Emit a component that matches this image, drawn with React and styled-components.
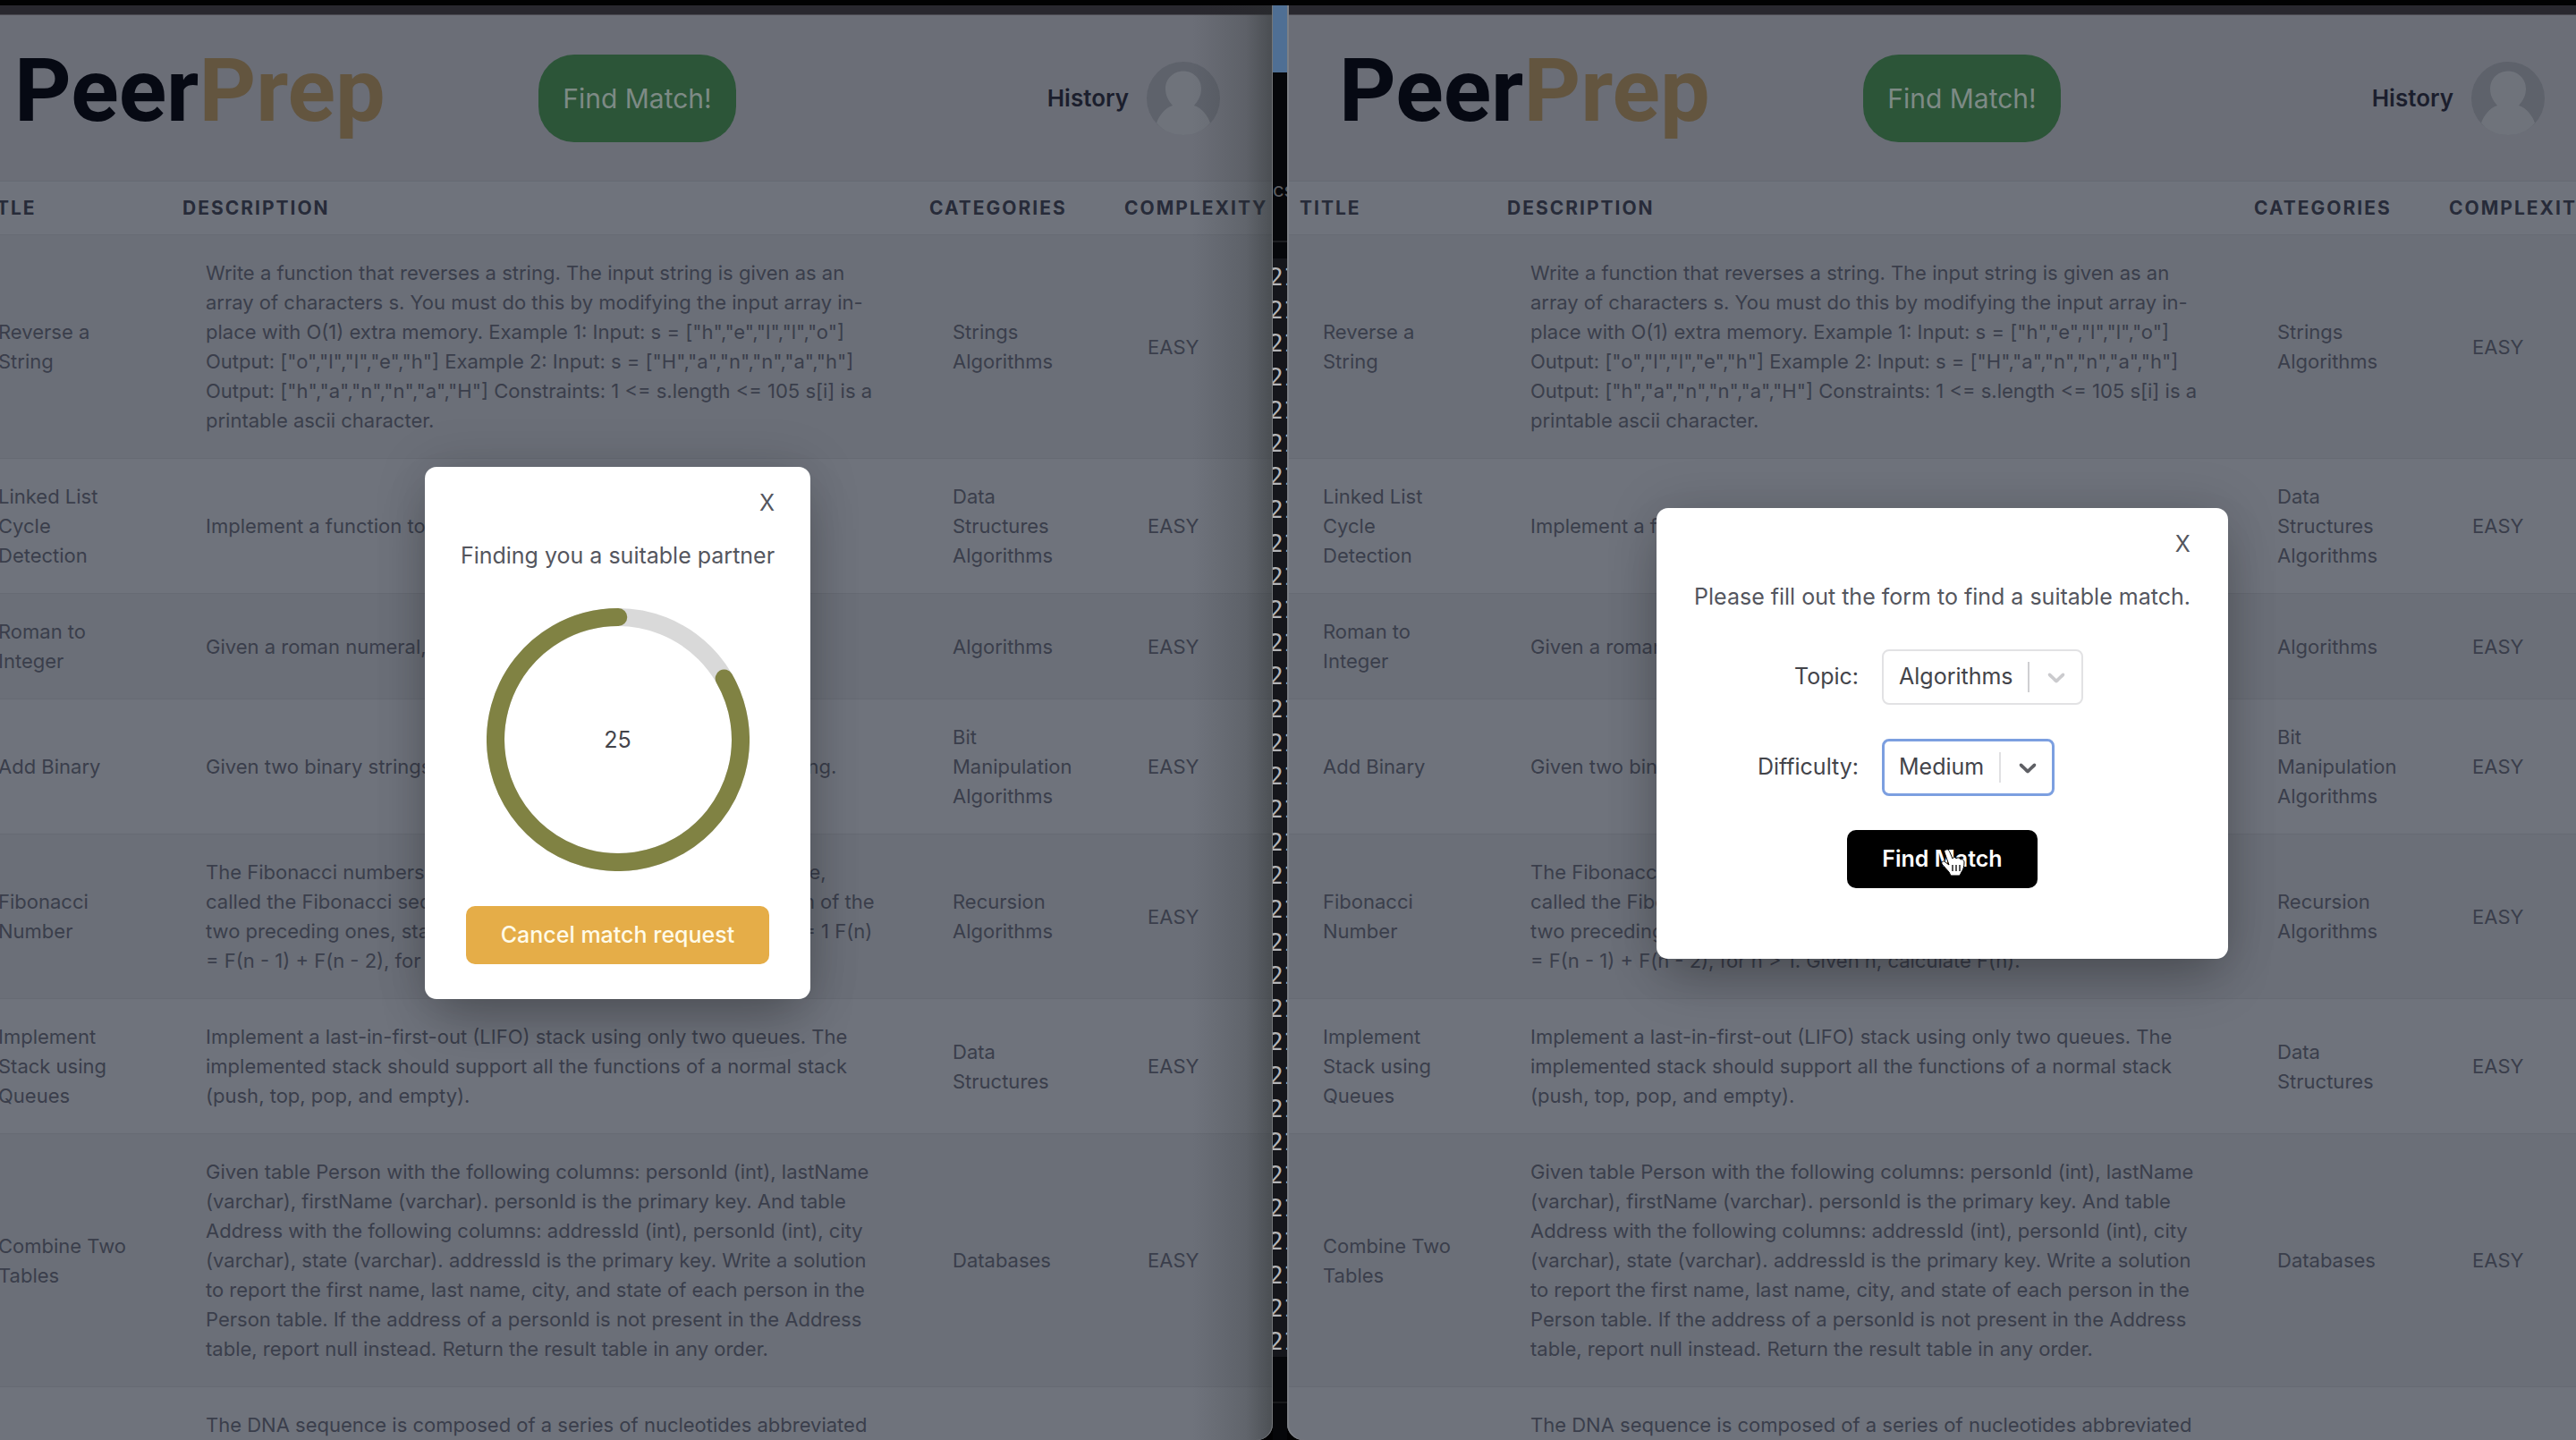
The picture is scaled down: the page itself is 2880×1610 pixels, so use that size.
import React from "react";
import styled, { createGlobalStyle } from "styled-components";

const c = {
  page: "#6b6e77",
  rowOdd: "#6b6f78",
  rowEven: "#6f737c",
  line: "#666a73",
  ink: "#3a3e4b",
  heading: "#272b39",
};

const GlobalStyle = createGlobalStyle`
  * { box-sizing: border-box; }
  body {
    margin: 0;
    background: #000;
    font-family: Inter, "Liberation Sans", sans-serif;
    -webkit-font-smoothing: antialiased;
  }
  button, select { font: inherit; }
  p { margin: 0; }
`;

const Desktop = styled.main`
  display: grid;
  grid-template-columns: 1423fr 16px 1441fr;
  height: 100vh;
  padding-top: 6px;
  overflow: hidden;
  background: #020203;
`;

const BrowserWindow = styled.section`
  position: relative;
  display: flex;
  flex-direction: column;
  align-items: ${(p) => (p.$side === "left" ? "flex-end" : "flex-start")};
  min-width: 0;
  overflow: hidden;
  background: ${c.page};
  border-radius: ${(p) => (p.$side === "left" ? "0 0 18px 0" : "0 0 0 18px")};

  &::after {
    content: "";
    position: absolute;
    inset: 0;
    pointer-events: none;
    border-radius: inherit;
    background: ${(p) =>
      p.$side === "left"
        ? "linear-gradient(to left, rgba(40, 44, 44, 0.5), rgba(40, 44, 44, 0.2) 30px, rgba(40, 44, 44, 0) 90px)"
        : "none"};
    box-shadow: ${(p) =>
      p.$side === "left" ? "inset -1px 0 0 #74777a" : "inset 2px 0 0 #7c7f85"};
  }
`;

const Chrome = styled.div`
  flex: none;
  width: 100%;
  height: 11px;
  background: #29282f;
  border-bottom: 1px solid #4b4b51;
`;

const Page = styled.div`
  flex: 1 0 0;
  width: 100%;
  min-width: 1465px;
  min-height: 0;
`;

const Header = styled.header`
  display: grid;
  grid-template-columns: 586px 221px 1fr;
  align-items: center;
  height: 185px;
  padding: 0 59px 0 58px;
`;

const Logo = styled.a`
  padding-bottom: 18px;
  color: #060913;
  font-family: Roboto, "Liberation Sans", sans-serif;
  font-size: 99px;
  font-weight: 700;
  line-height: 120px;
  text-decoration: none;
  span { color: #63553f; }
`;

const MatchButton = styled.button`
  height: 98px;
  border: 0;
  border-radius: 40px;
  background: #2c5538;
  color: #7d8a85;
  font-size: 30px;
  white-space: nowrap;
`;

const Nav = styled.nav`
  display: flex;
  align-items: center;
  justify-content: flex-end;
  gap: 20px;
`;

const NavLink = styled.a`
  color: #1b1e2d;
  font-size: 26px;
  font-weight: 600;
  text-decoration: none;
`;

const AvatarIcon = styled.svg`
  display: block;
  width: 82px;
  height: 82px;
`;

const Table = styled.table`
  width: 100%;
  table-layout: fixed;
  border-collapse: collapse;
  color: ${c.ink};
  font-size: 22px;
  line-height: 33px;
`;

const HeadCell = styled.th`
  height: 60px;
  padding: 1px 0 0 14px;
  background: ${c.rowEven};
  border-top: 1px solid ${c.line};
  border-bottom: 1px solid ${c.line};
  color: ${c.heading};
  font-size: 21px;
  font-weight: 700;
  letter-spacing: 2px;
  line-height: 32px;
  text-align: left;
  text-transform: uppercase;
`;

const Row = styled.tr`
  background: ${c.rowOdd};
  border-bottom: 1px solid ${c.line};
  &:nth-child(even) { background: ${c.rowEven}; }
`;

const Cell = styled.td`
  padding: 26px 38px 25px 40px;
  vertical-align: middle;
`;

const Terminal = styled.aside`
  display: flex;
  flex-direction: column;
  min-height: 0;
  overflow: hidden;
  background: #06070a;
  color: #b4b5b8;
  font-family: "DejaVu Sans Mono", monospace;
  font-size: 26px;
`;

const TerminalTab = styled.div`
  flex: none;
  height: 75px;
  background: #4f6f94;
`;

const TerminalTitle = styled.div`
  flex: none;
  height: 190px;
  padding-top: 118px;
  border-bottom: 2px solid #1c1d20;
  color: #5c5d61;
  font-family: Inter, sans-serif;
  font-size: 22px;
`;

const TerminalLog = styled.div`
  flex: 1 1 0;
  display: flex;
  flex-direction: column;
  justify-content: space-between;
  min-height: 0;
  margin: 18px 0 50px;
  padding-top: 4px;
  background: #15161b;
  text-indent: -4px;
  line-height: 34px;
`;

const TerminalFoot = styled.div`
  flex: none;
  height: 43px;
  border-top: 2px solid #17181a;
`;

const Overlay = styled.div`
  position: absolute;
  top: 23px;
  bottom: 0;
  width: 100%;
  min-width: 1465px;
  display: flex;
  align-items: center;
  justify-content: center;
`;

const Modal = styled.div`
  display: flex;
  flex-direction: column;
  align-items: center;
  padding: ${(p) => (p.$roomy ? "21px 42px 79px" : "21px 40px 39px")};
  border-radius: 13px;
  background: #fff;
  box-shadow: 0 30px 60px -12px rgba(0, 0, 0, 0.26), 0 0 60px rgba(0, 0, 0, 0.14);
  color: #54565e;
  font-size: 25px;
  line-height: 39px;
`;

const CloseButton = styled.button`
  align-self: flex-end;
  padding: 0;
  border: 0;
  background: none;
  color: inherit;
  line-height: 39px;
`;

const Message = styled.p`
  margin: 20px 0 39px;
  white-space: nowrap;
`;

const Timer = styled.div`
  display: grid;
  place-items: center;
  margin-bottom: 39px;
  color: #43444a;
  > * { grid-area: 1 / 1; }
`;

const Ring = styled.svg`
  width: 294px;
  height: 294px;
`;

const ActionButton = styled.button`
  height: 65px;
  padding: 0 39px;
  border: 0;
  border-radius: 10px;
  background: ${(p) => (p.$dark ? "#000" : "#e5ad48")};
  color: ${(p) => (p.$dark ? "#fff" : "#fffbe8")};
  font-weight: ${(p) => (p.$dark ? 600 : 500)};
  white-space: nowrap;
`;

const Form = styled.form`
  display: flex;
  flex-direction: column;
  align-items: center;
  width: 100%;
  gap: 38px;
`;

const Field = styled.div`
  display: grid;
  grid-template-columns: 8fr 15fr;
  column-gap: 26px;
  align-items: center;
  width: 100%;
  color: #43444a;
`;

const FieldLabel = styled.label`
  text-align: right;
`;

const SelectBox = styled.div`
  display: grid;
  align-items: center;
  justify-self: start;
  > * { grid-area: 1 / 1; }
`;

const Select = styled.select`
  appearance: none;
  height: ${(p) => (p.$active ? "64px" : "62px")};
  padding: 0 76px 0 ${(p) => (p.$active ? "16px" : "17px")};
  border: ${(p) => (p.$active ? "3px solid #7c9fe0" : "2px solid #e2e2e4")};
  border-radius: 8px;
  background: #fff;
  color: #43444a;
  outline: none;
  field-sizing: content;
`;

const SelectArrow = styled.div`
  justify-self: end;
  display: flex;
  align-items: center;
  height: 34px;
  padding: 0 14px;
  border-left: 2px solid ${(p) => (p.$active ? "#e0e0e2" : "#cfcfd2")};
  color: ${(p) => (p.$active ? "#5f6065" : "#cbcbce")};
  pointer-events: none;
  svg { display: block; width: 32px; height: 32px; }
`;

const SubmitArea = styled.div`
  position: relative;
`;

const Pointer = styled.svg`
  position: absolute;
  left: 104px;
  top: 20px;
  width: 28px;
  height: 33px;
`;

const questions = [
  ["Reverse a String", 'Write a function that reverses a string. The input string is given as an array of characters s. You must do this by modifying the input array in-place with O(1) extra memory. Example 1: Input: s = ["h","e","l","l","o"] Output: ["o","l","l","e","h"] Example 2: Input: s = ["H","a","n","n","a","h"] Output: ["h","a","n","n","a","H"] Constraints: 1 <= s.length <= 105 s[i] is a printable ascii character.', ["Strings", "Algorithms"]],
  ["Linked List Cycle Detection", "Implement a function to detect if a linked list contains a cycle.", ["Data Structures", "Algorithms"]],
  ["Roman to Integer", "Given a roman numeral, convert it to an integer.", ["Algorithms"]],
  ["Add Binary", "Given two binary strings a and b, return their sum as a binary string.", ["Bit Manipulation", "Algorithms"]],
  ["Fibonacci Number", "The Fibonacci numbers, commonly denoted F(n) form a sequence, called the Fibonacci sequence, such that each number is the sum of the two preceding ones, starting from 0 and 1. That is, F(0) = 0, F(1) = 1 F(n) = F(n - 1) + F(n - 2), for n > 1. Given n, calculate F(n).", ["Recursion", "Algorithms"]],
  ["Implement Stack using Queues", "Implement a last-in-first-out (LIFO) stack using only two queues. The implemented stack should support all the functions of a normal stack (push, top, pop, and empty).", ["Data Structures"]],
  ["Combine Two Tables", "Given table Person with the following columns: personId (int), lastName (varchar), firstName (varchar). personId is the primary key. And table Address with the following columns: addressId (int), personId (int), city (varchar), state (varchar). addressId is the primary key. Write a solution to report the first name, last name, city, and state of each person in the Person table. If the address of a personId is not present in the Address table, report null instead. Return the result table in any order.", ["Databases"]],
  ["Repeated DNA Sequences", "The DNA sequence is composed of a series of nucleotides abbreviated as 'A', 'C', 'G', and 'T'. For example, \"ACGAATTCCG\" is a DNA sequence. When studying DNA, it is useful to identify repeated sequences within the DNA. Given a string s that represents a DNA sequence, return all the 10-letter-long sequences that occur more than once in a DNA molecule. You may return the answer in any order.", ["Algorithms", "Bit Manipulation"]],
];

function Avatar() {
  return (
    <AvatarIcon viewBox="0 0 82 82" aria-label="Profile">
      <circle cx="41" cy="41" r="41" fill="#5e626b" />
      <path
        d="M41 10.500C52 10.500 61 19 61 30C61 38 58 43 53 49C62 52 68 60 71 68.500C63 78 53 82 41 82C29 82 19 78 11 68.500C14 60 20 52 29 49C24 43 21 38 21 30C21 19 30 10.500 41 10.500Z"
        fill="#6f737b"
      />
    </AvatarIcon>
  );
}

function QuestionPage() {
  return (
    <Page>
      <Header>
        <Logo href="#home">Peer<span>Prep</span></Logo>
        <MatchButton type="button">Find Match!</MatchButton>
        <Nav>
          <NavLink href="#history">History</NavLink>
          <Avatar />
        </Nav>
      </Header>
      <Table>
        <colgroup>
          <col style={{ width: 232 }} />
          <col />
          <col style={{ width: 218 }} />
          <col style={{ width: 180 }} />
        </colgroup>
        <thead>
          <tr>
            {["Title", "Description", "Categories", "Complexity"].map((h) => (
              <HeadCell key={h} scope="col">{h}</HeadCell>
            ))}
          </tr>
        </thead>
        <tbody>
          {questions.map(([title, description, categories]) => (
            <Row key={title}>
              <Cell>{title}</Cell>
              <Cell>{description}</Cell>
              <Cell>{categories.map((name) => <div key={name}>{name}</div>)}</Cell>
              <Cell>EASY</Cell>
            </Row>
          ))}
        </tbody>
      </Table>
    </Page>
  );
}

function Countdown({ seconds, total }) {
  const r = 137;
  const length = 2 * Math.PI * r;
  const left = seconds / total;
  return (
    <Timer role="timer">
      <Ring viewBox="0 0 294 294">
        <circle cx="147" cy="147" r={r} fill="none" stroke="#d9d9d9" strokeWidth="20" />
        <circle
          cx="147"
          cy="147"
          r={r}
          fill="none"
          stroke="#808243"
          strokeWidth="20"
          strokeLinecap="round"
          strokeDasharray={`${length * left} ${length}`}
          transform={`rotate(${270 - 360 * left} 147 147)`}
        />
      </Ring>
      <span>{seconds}</span>
    </Timer>
  );
}

function SelectField({ id, label, options, value, active }) {
  return (
    <Field>
      <FieldLabel htmlFor={id}>{label}</FieldLabel>
      <SelectBox>
        <Select id={id} defaultValue={value} $active={active}>
          {options.map((o) => <option key={o}>{o}</option>)}
        </Select>
        <SelectArrow $active={active}>
          <svg viewBox="0 0 20 20" fill="currentColor" aria-hidden="true">
            <path d="M4.516 7.548c0.436-0.446 1.043-0.481 1.576 0l3.908 3.747 3.908-3.747c0.533-0.481 1.141-0.446 1.574 0 0.436 0.445 0.408 1.197 0 1.615-0.406 0.418-4.695 4.502-4.695 4.502-0.217 0.223-0.502 0.335-0.787 0.335s-0.57-0.112-0.789-0.335c0 0-4.287-4.084-4.695-4.502s-0.436-1.17 0-1.615z" />
          </svg>
        </SelectArrow>
      </SelectBox>
    </Field>
  );
}

function HandPointer() {
  return (
    <Pointer viewBox="0 0 28 33" aria-hidden="true">
      <path
        d="M7 2C9 1 10 3 11 5L14 12C15 10 17 10 18 12C20 10 22 11 23 13C25 12 27 14 27 16C27 21 26 24 24 27L22 31H12L10 27C7 24 5 21 2 18C1 15 4 14 6 16L10 19L5 5C4 3 6 2 7 2Z"
        fill="#fff"
        stroke="#000"
        strokeWidth="1"
      />
      <path d="M14 19V26M18 19V26M22 19V26" stroke="#222" strokeWidth="1.5" />
    </Pointer>
  );
}

export default function App() {
  return (
    <>
      <GlobalStyle />
      <Desktop>
        <BrowserWindow $side="left">
          <Chrome />
          <QuestionPage />
          <Overlay>
            <Modal role="dialog" aria-label="Finding a partner">
              <CloseButton type="button">X</CloseButton>
              <Message>Finding you a suitable partner</Message>
              <Countdown seconds={25} total={30} />
              <ActionButton type="button">Cancel match request</ActionButton>
            </Modal>
          </Overlay>
        </BrowserWindow>
        <Terminal>
          <TerminalTab />
          <TerminalTitle>cs</TerminalTitle>
          <TerminalLog>
            {Array.from({ length: 33 }, (_, i) => <div key={i}>21</div>)}
          </TerminalLog>
          <TerminalFoot />
        </Terminal>
        <BrowserWindow $side="right">
          <Chrome />
          <QuestionPage />
          <Overlay>
            <Modal role="dialog" aria-label="Find a match" $roomy>
              <CloseButton type="button">X</CloseButton>
              <Message>Please fill out the form to find a suitable match.</Message>
              <Form>
                <SelectField id="topic" label="Topic:" value="Algorithms" options={["Algorithms", "Strings", "Databases"]} />
                <SelectField id="difficulty" label="Difficulty:" value="Medium" options={["Easy", "Medium", "Hard"]} active />
                <SubmitArea>
                  <ActionButton type="button" $dark>Find Match</ActionButton>
                  <HandPointer />
                </SubmitArea>
              </Form>
            </Modal>
          </Overlay>
        </BrowserWindow>
      </Desktop>
    </>
  );
}
